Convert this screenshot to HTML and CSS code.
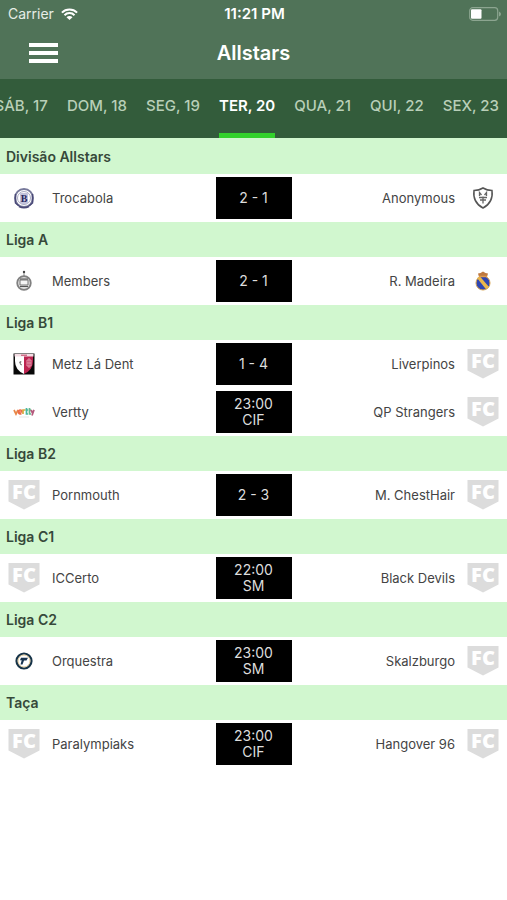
FILE: index.html
```html
<!DOCTYPE html>
<html lang="pt">
<head>
<meta charset="utf-8">
<meta name="viewport" content="width=device-width, initial-scale=1">
<title>Allstars</title>
<link rel="stylesheet" href="styles.css">
</head>
<body>
<header class="header">
  <div class="status">
    <div class="carrier">Carrier
      <svg width="17" height="12" viewBox="0 0 17 12" aria-hidden="true"><g fill="none" stroke="#fff" stroke-width="2"><path d="M.9 4.600a10.700 10.700 0 0 1 15.200 0"/><path d="M3.500 7.200a7 7 0 0 1 10 0"/></g><path fill="#fff" d="M5.500 9.200a4.200 4.200 0 0 1 6 0L8.500 12Z"/></svg>
    </div>
    <div class="time">11:21 PM</div>
    <svg class="battery" width="32" height="14" viewBox="0 0 32 14" aria-hidden="true"><rect x=".7" y=".7" width="28" height="12.600" rx="3" fill="none" stroke="#8ca590" stroke-width="1.200"/><rect x="2" y="2.300" width="10.500" height="9.400" rx="1" fill="#fff"/><path fill="#8ca590" d="M30 4.500q2 1 2 2.500t-2 2.500Z"/></svg>
  </div>
  <div class="bar">
    <button class="menu" aria-label="Menu"><span></span><span></span><span></span></button>
    <h1>Allstars</h1>
  </div>
</header>
<nav class="days">
  <a href="#">SÁB, 17</a><a href="#">DOM, 18</a><a href="#">SEG, 19</a><a href="#" class="active" aria-current="date">TER, 20</a><a href="#">QUA, 21</a><a href="#">QUI, 22</a><a href="#">SEX, 23</a>
</nav>
<main>
  <section>
    <h2>Divisão Allstars</h2>
    <div class="match">
      <div class="team"><svg class="crest" viewBox="0 0 32 32"><circle cx="16" cy="16" r="9" fill="#fff" stroke="#77799b" stroke-width="2"/><circle cx="16" cy="16" r="6.500" fill="none" stroke="#aaabc4"/><path d="M7.500 12V21L11 24M24.500 12V21L21 24" fill="none" stroke="#4a4977" stroke-width="1.500"/><path d="M11 24.500Q16 27 21 24.500" fill="none" stroke="#4a4977" stroke-width="1.500"/><rect x="12" y="11" width="8" height="11" rx="1" fill="#c2c2da"/><text class="b-text" x="16" y="20" text-anchor="middle">B</text></svg><span>Trocabola</span></div>
      <div class="score">2 - 1</div>
      <div class="team away"><span>Anonymous</span><svg class="crest" viewBox="0 0 32 32"><path d="M7 8.500Q12 8.500 16 6Q20 8.500 25 8.500Q26.500 20.500 16 26Q5.500 20.500 7 8.500Z" fill="#fff" stroke="#555" stroke-width="1.500"/><path d="M12.500 14V10.500L14.500 13M19.500 14V10.500L17.500 13M12 15.500H20M16 14.500V21.500M13 18H19" fill="none" stroke="#666" stroke-width="1.300"/></svg></div>
    </div>
  </section>
  <section>
    <h2>Liga A</h2>
    <div class="match">
      <div class="team"><svg class="crest" viewBox="0 0 32 32"><circle cx="16" cy="7" r="1.200" fill="#444"/><path d="M16 8V11" stroke="#888"/><circle cx="16" cy="18" r="6.800" fill="#ddd" stroke="#808080" stroke-width="1.800"/><path d="M12 15H20V20H12Z" fill="#f5f5f5" stroke="#777"/><path d="M12 14H20M12 21.500H20" stroke="#555"/></svg><span>Members</span></div>
      <div class="score">2 - 1</div>
      <div class="team away"><span>R. Madeira</span><svg class="crest" viewBox="0 0 32 32"><circle cx="16" cy="18" r="7" fill="#2f46b2" stroke="#d8a34b"/><path d="M10 13L13 11.500L22 22L19 24.300Z" fill="#ebb84b"/><path d="M12 12L11 8.500L13.500 8L16 6.500L18.500 8L21 8.500L20 12Z" fill="#be7941"/><path d="M12 11.500H20" stroke="#df9c4e" stroke-width="1.500"/></svg></div>
    </div>
  </section>
  <section>
    <h2>Liga B1</h2>
    <div class="match">
      <div class="team"><svg class="crest" viewBox="0 0 32 32"><rect x="5.500" y="5.500" width="21" height="21" fill="#080808"/><path d="M7 7H16V26Q7 22 7 13Z" fill="#fff"/><path d="M16 7H25V13Q25 22 16 26Z" fill="#bc2450"/><path d="M6.500 6H25.500V8.500H6.500Z" fill="#f4dde4"/><path d="M13 7.200H19" stroke="#bd4263"/><path d="M19 12H23V18H19ZM19 15H23M21 10V20" fill="none" stroke="#e494aa"/><path d="M11 14.500L13 13.500L12 16L14 17" fill="none" stroke="#777"/></svg><span>Metz Lá Dent</span></div>
      <div class="score">1 - 4</div>
      <div class="team away"><span>Liverpinos</span><svg class="crest" viewBox="0 0 32 32"><path class="shield" d="M.5 1H31.500V22.500L16 30.500L.5 22.500Z"/><text class="fc-text" x="16" y="20" text-anchor="middle">FC</text></svg></div>
    </div>
    <div class="match">
      <div class="team"><svg class="crest" viewBox="0 0 32 32"><g fill="none" stroke-width="1.700"><path d="M6 14L8 18L10 14" stroke="#e88747"/><path d="M10.500 16H14Q14 14 12.200 14T10.500 16Q10.500 18 13.500 18" stroke="#ed6b48"/><path d="M15 18V14H17.500" stroke="#d6aa3e"/><path d="M18.500 12V18H20M17.500 14H20" stroke="#4bb7a0"/><path d="M21.500 12V18H23M20.500 14H23" stroke="#65b98b"/><path d="M23 14L24.500 17L26 14L24 19.500" stroke="#b4597c"/></g><path d="M11 21H21" stroke="#e7e7e7"/></svg><span>Vertty</span></div>
      <div class="score">23:00<br>CIF</div>
      <div class="team away"><span>QP Strangers</span><svg class="crest" viewBox="0 0 32 32"><path class="shield" d="M.5 1H31.500V22.500L16 30.500L.5 22.500Z"/><text class="fc-text" x="16" y="20" text-anchor="middle">FC</text></svg></div>
    </div>
  </section>
  <section>
    <h2>Liga B2</h2>
    <div class="match">
      <div class="team"><svg class="crest" viewBox="0 0 32 32"><path class="shield" d="M.5 1H31.500V22.500L16 30.500L.5 22.500Z"/><text class="fc-text" x="16" y="20" text-anchor="middle">FC</text></svg><span>Pornmouth</span></div>
      <div class="score">2 - 3</div>
      <div class="team away"><span>M. ChestHair</span><svg class="crest" viewBox="0 0 32 32"><path class="shield" d="M.5 1H31.500V22.500L16 30.500L.5 22.500Z"/><text class="fc-text" x="16" y="20" text-anchor="middle">FC</text></svg></div>
    </div>
  </section>
  <section>
    <h2>Liga C1</h2>
    <div class="match">
      <div class="team"><svg class="crest" viewBox="0 0 32 32"><path class="shield" d="M.5 1H31.500V22.500L16 30.500L.5 22.500Z"/><text class="fc-text" x="16" y="20" text-anchor="middle">FC</text></svg><span>ICCerto</span></div>
      <div class="score">22:00<br>SM</div>
      <div class="team away"><span>Black Devils</span><svg class="crest" viewBox="0 0 32 32"><path class="shield" d="M.5 1H31.500V22.500L16 30.500L.5 22.500Z"/><text class="fc-text" x="16" y="20" text-anchor="middle">FC</text></svg></div>
    </div>
  </section>
  <section>
    <h2>Liga C2</h2>
    <div class="match">
      <div class="team"><svg class="crest" viewBox="0 0 32 32"><circle cx="16" cy="16" r="7.500" fill="#fff" stroke="#163348" stroke-width="2.200"/><circle cx="16" cy="16" r="6" fill="none" stroke="#d9bd83" stroke-width=".8"/><path d="M13 12.800H20L18.500 15.500H16L14.500 19.500H12.500L13.700 15.300H12Z" fill="#17334f"/></svg><span>Orquestra</span></div>
      <div class="score">23:00<br>SM</div>
      <div class="team away"><span>Skalzburgo</span><svg class="crest" viewBox="0 0 32 32"><path class="shield" d="M.5 1H31.500V22.500L16 30.500L.5 22.500Z"/><text class="fc-text" x="16" y="20" text-anchor="middle">FC</text></svg></div>
    </div>
  </section>
  <section>
    <h2>Taça</h2>
    <div class="match">
      <div class="team"><svg class="crest" viewBox="0 0 32 32"><path class="shield" d="M.5 1H31.500V22.500L16 30.500L.5 22.500Z"/><text class="fc-text" x="16" y="20" text-anchor="middle">FC</text></svg><span>Paralympiaks</span></div>
      <div class="score">23:00<br>CIF</div>
      <div class="team away"><span>Hangover 96</span><svg class="crest" viewBox="0 0 32 32"><path class="shield" d="M.5 1H31.500V22.500L16 30.500L.5 22.500Z"/><text class="fc-text" x="16" y="20" text-anchor="middle">FC</text></svg></div>
    </div>
  </section>
</main>
</body>
</html>
```
FILE: styles.css
```css
* { box-sizing: border-box; }
body {
  margin: 0;
  background: #fff;
  color: #444;
  font-family: Inter, "Liberation Sans", sans-serif;
  font-size: 13px;
  line-height: 16px;
}
.header { background: #507358; color: #fff; }
.status {
  display: grid;
  grid-template-columns: 1fr auto 1fr;
  align-items: center;
  height: 27px;
  padding: 0 6px 0 8px;
}
.carrier { display: flex; align-items: center; gap: 7px; color: #e6ede6; font-size: 14px; }
.time { font-size: 15px; font-weight: 600; }
.battery { justify-self: end; }
.bar {
  display: grid;
  grid-template-columns: 1fr auto 1fr;
  align-items: center;
  height: 52px;
  padding: 0 28px;
}
h1 { margin: 0; font-size: 20px; line-height: 24px; font-weight: 600; }
.menu {
  display: flex;
  flex-direction: column;
  justify-self: start;
  gap: 4px;
  padding: 0 1px;
  border: 0;
  background: none;
}
.menu span { width: 29px; height: 4px; background: #fff; }
.days {
  display: flex;
  justify-content: flex-end;
  gap: 19px;
  height: 60px;
  padding: 0 8px;
  overflow: hidden;
  background: #335c3b;
  border-bottom: 1px solid #d1f7cf;
}
.days a {
  flex: none;
  padding-top: 19px;
  border-bottom: 5px solid transparent;
  color: #b9cfb8;
  font-size: 15px;
  font-weight: 500;
  text-decoration: none;
}
.days .active { color: #fff; font-weight: 600; border-color: #33d12c; }
h2 {
  margin: 0;
  padding: 0 6px;
  background: #d1f7cf;
  color: #36493a;
  font-size: 14px;
  line-height: 35px;
  font-weight: 600;
}
.match {
  display: grid;
  grid-template-columns: 1fr 76px 1fr;
  align-items: center;
  height: 48px;
}
.team { display: flex; align-items: center; gap: 12px; padding: 0 8px; }
.away { justify-content: flex-end; }
.crest { flex: none; width: 32px; height: 32px; }
.shield { fill: #dcdcdc; }
.fc-text { fill: #fff; font: 800 20px "Open Sans", sans-serif; }
.b-text { fill: #29275f; font: 700 10px "Liberation Serif", serif; }
.score {
  display: grid;
  align-content: center;
  height: 42px;
  background: #000;
  color: #ddd;
  font-size: 14px;
  text-align: center;
}
```
